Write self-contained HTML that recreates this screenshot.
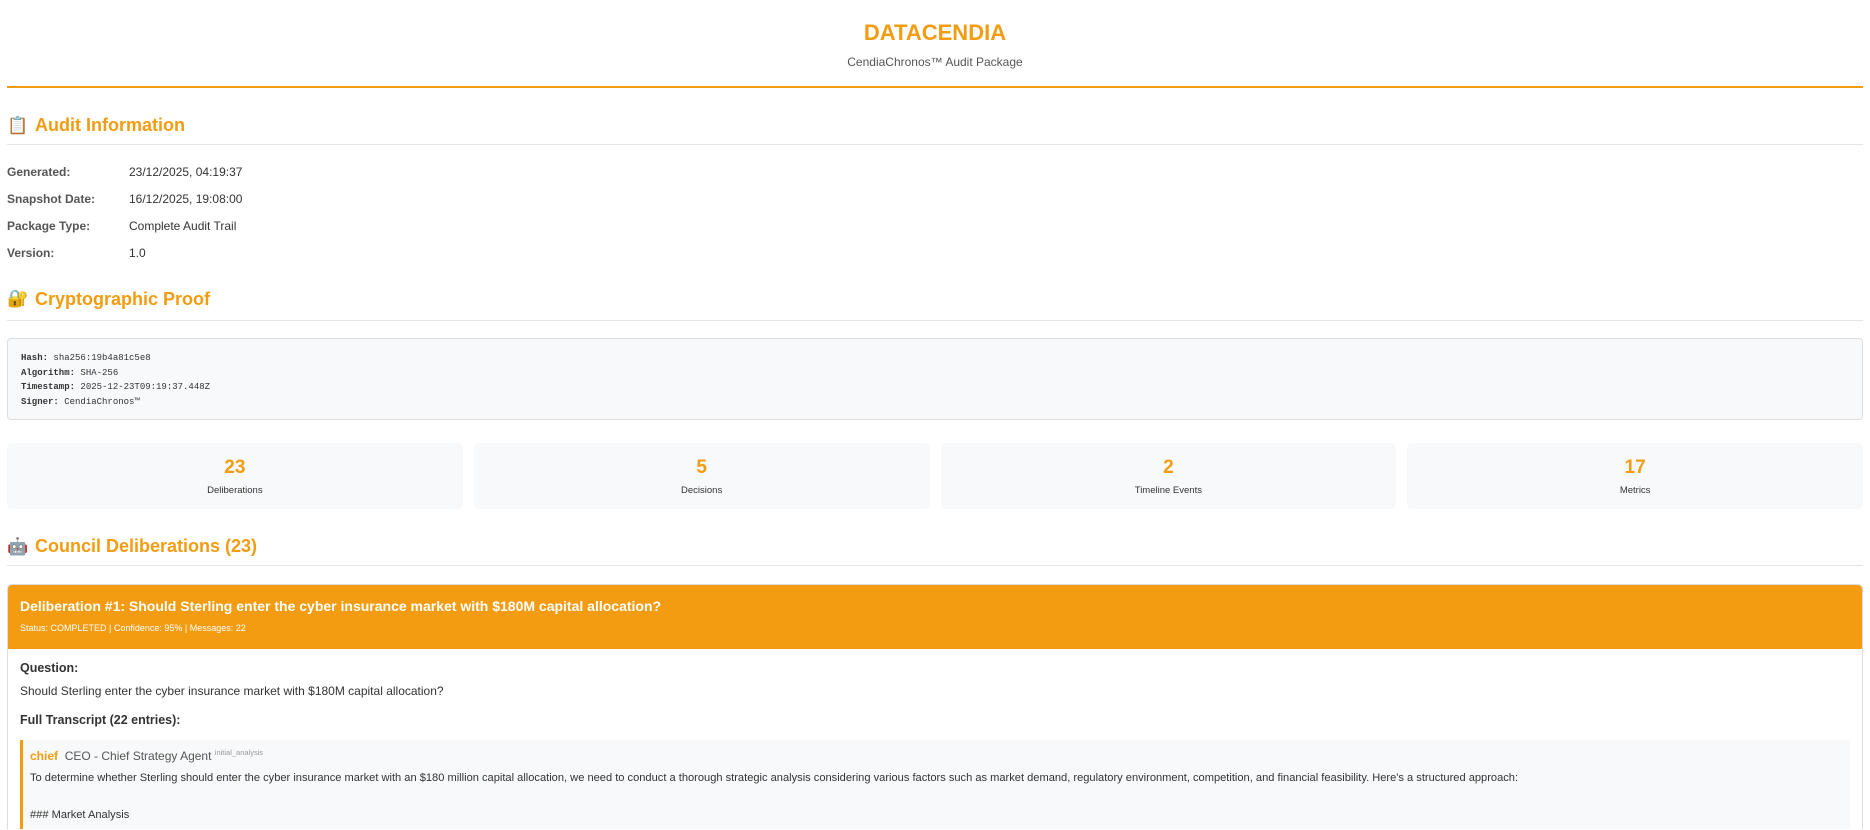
<!DOCTYPE html>
<html><head><meta charset="utf-8"><style>
*{box-sizing:border-box;margin:0;padding:0}
html,body{width:1870px;height:830px;overflow:hidden;background:#fff}
body{font-family:"Liberation Sans",Arial,sans-serif;color:#333}
.wrap{width:1870px;height:830px;overflow:hidden;padding:0 7px}
.hdr{text-align:center;height:88px;border-bottom:2px solid #f39c12}
.hdr h1{font-size:22px;color:#f39c12;font-weight:bold;padding-top:21px;line-height:24px}
.hdr p{font-size:12px;color:#555;margin-top:10px}
h2{font-size:18px;color:#f39c12;font-weight:bold;border-bottom:1px solid #e5e5e5;display:flex;align-items:center}
h2 .ic{font-size:17px;margin-right:9px;width:19px}
.row{display:flex;font-size:12px;height:27px;align-items:center}
.row .l{width:122px;color:#555;font-weight:bold}
.code{background:#f8f9fa;border:1px solid #ddd;border-radius:4px;height:82px;padding:12px 13px;font-family:"Liberation Mono",monospace;font-size:9px;line-height:14.5px;color:#333}
.stats{display:flex;gap:11px;margin-top:23px}
.card{flex:1;background:#f8f9fa;border-radius:5px;height:66px;text-align:center}
.card .n{font-size:19px;font-weight:bold;color:#f39c12;padding-top:14px;line-height:22px}
.card .t{font-size:9.5px;color:#333;margin-top:6px}
.del{border:1px solid #ddd;border-bottom:none;border-radius:5px 5px 0 0;overflow:hidden;margin-top:18px;height:245px}
.dh{background:#f39c12;color:#fff;height:64px;padding:13px 12px}
.dh .a{font-size:14px;font-weight:bold}
.dh .b{font-size:9px;margin-top:9px}
.db{padding:12px 12px}
.q{font-size:12.5px;font-weight:bold}
.tx{font-size:12px}
.tr{background:#f8f9fa;border-left:3px solid #f39c12;margin-top:13px;padding:8px 7px;height:140px}
.tr .tx{font-size:11.1px}
</style></head><body><div class="wrap">
<div class="hdr"><h1>DATACENDIA</h1><p>CendiaChronos™ Audit Package</p></div>
<h2 style="margin-top:21px;height:36px;padding-bottom:2px">
<span class="ic">📋</span>Audit Information</h2>
<div style="margin-top:13px">
<div class="row"><span class="l">Generated:</span>23/12/2025, 04:19:37</div>
<div class="row"><span class="l">Snapshot Date:</span>16/12/2025, 19:08:00</div>
<div class="row"><span class="l">Package Type:</span>Complete Audit Trail</div>
<div class="row"><span class="l">Version:</span>1.0</div>
</div>
<h2 style="margin-top:16px;height:39px;padding-bottom:4px"><span class="ic">🔐</span>Cryptographic Proof</h2>
<div class="code" style="margin-top:17px">
<div><b>Hash:</b> sha256:19b4a81c5e8</div>
<div><b>Algorithm:</b> SHA-256</div>
<div><b>Timestamp:</b> 2025-12-23T09:19:37.448Z</div>
<div><b>Signer:</b> CendiaChronos™</div>
</div>
<div class="stats">
<div class="card"><div class="n">23</div><div class="t">Deliberations</div></div>
<div class="card"><div class="n">5</div><div class="t">Decisions</div></div>
<div class="card"><div class="n">2</div><div class="t">Timeline Events</div></div>
<div class="card"><div class="n">17</div><div class="t">Metrics</div></div>
</div>
<h2 style="margin-top:21px;height:36px;padding-bottom:2px"><span class="ic">🤖</span>Council Deliberations (23)</h2>
<div class="del">
<div class="dh"><div class="a">Deliberation #1: Should Sterling enter the cyber insurance market with $180M capital allocation?</div>
<div class="b">Status: COMPLETED | Confidence: 95% | Messages: 22</div></div>
<div class="db">
<div class="q">Question:</div>
<div class="tx" style="margin-top:9px">Should Sterling enter the cyber insurance market with $180M capital allocation?</div>
<div class="q" style="margin-top:15px">Full Transcript (22 entries):</div>
<div class="tr">
<div style="font-size:12px"><span style="color:#f39c12;font-weight:bold">chief</span>&nbsp; <span style="color:#555">CEO - Chief Strategy Agent</span> <sup style="font-size:7.5px;color:#999">initial_analysis</sup></div>
<div class="tx" style="margin-top:9px">To determine whether Sterling should enter the cyber insurance market with an $180 million capital allocation, we need to conduct a thorough strategic analysis considering various factors such as market demand, regulatory environment, competition, and financial feasibility. Here's a structured approach:</div>
<div class="tx" style="margin-top:25px">### Market Analysis</div>
</div>
</div></div>
</div></body></html>
